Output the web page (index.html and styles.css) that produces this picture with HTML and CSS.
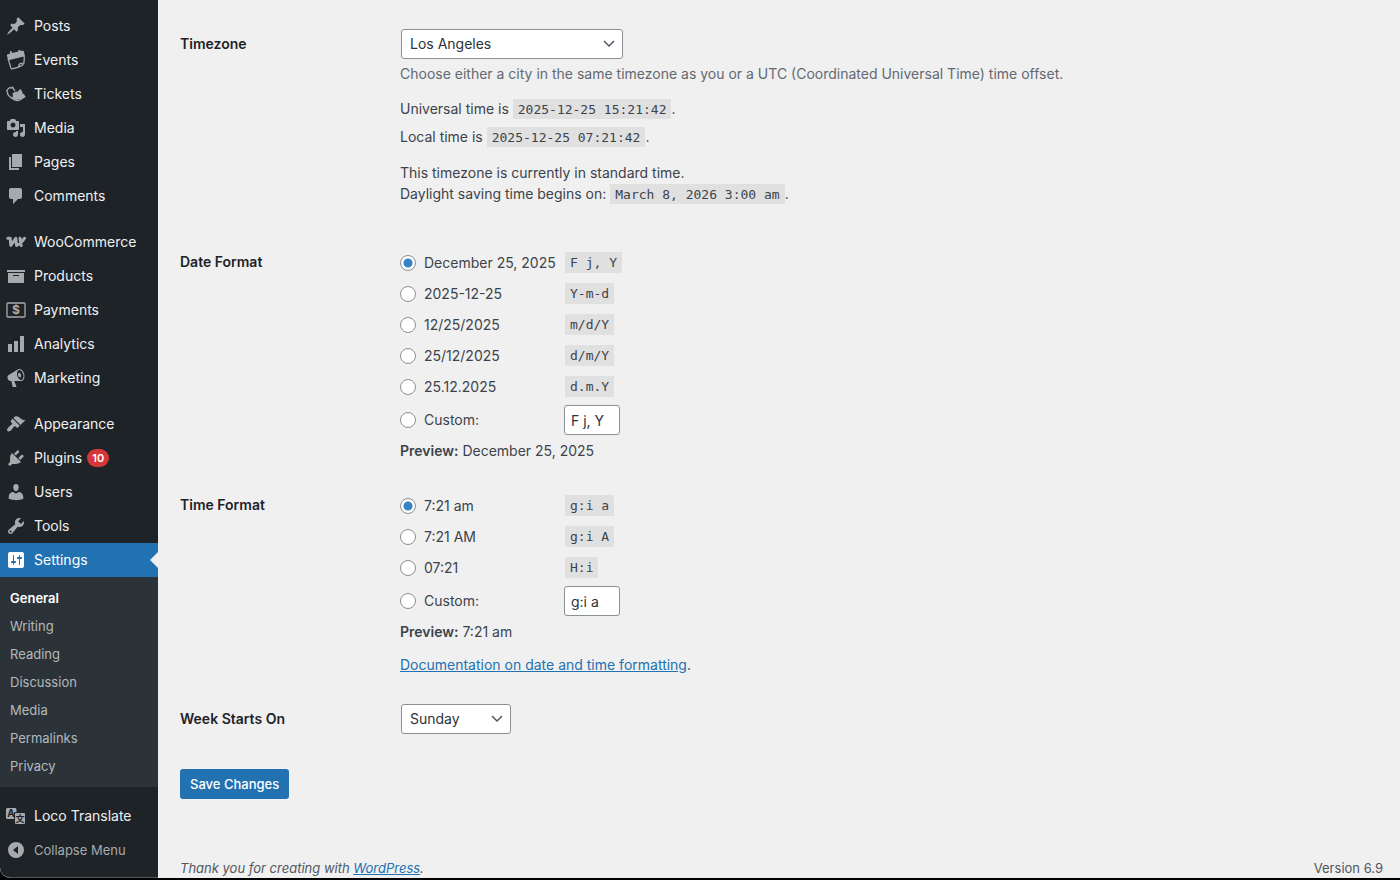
FILE: index.html
```html
<!DOCTYPE html>
<html lang="en-US">
<head>
    <meta charset="utf-8">
    <title>General Settings</title>
    <link rel="stylesheet" href="styles.css">
</head>

<body>
<div id="wpwrap">

    <nav id="adminmenu">
        <ul class="menu">
            <li><a href="#"><svg viewBox="0 0 20 20"><path d="M10.44 3.02l1.82-1.82 6.36 6.35-1.83 1.82c-1.05-.68-2.48-.57-3.41.36l-.75.75c-.92.93-1.04 2.35-.35 3.41l-1.83 1.82-2.41-2.41-2.8 2.79c-.42.42-3.38 2.71-3.8 2.29s1.86-3.39 2.28-3.81l2.79-2.79L4.1 9.36l1.83-1.82c1.05.69 2.48.57 3.4-.36l.75-.75c.93-.92 1.05-2.35.36-3.41z"/></svg>Posts</a></li>
            <li><a href="#"><svg viewBox="0 0 20 20"><path d="M1 4.500L4 3.700 3.700 1.500l1.800-.4.5 2 6.500-1.600-.4-1.500 1.900-.4.5 1.500 2-.3c.9 0 1.500.5 1.600 1.200l.6 4.200L2.600 10.200.9 6z"/><path class="line" d="M2 8.500l3 9.600c.2.600.600.800 1.200.700l6.300-1.600c.2-2.400.8-3.800 2.600-3.900l2.800-.2c.5-2.500.5-5 .2-8M12.500 17.200c2.300-.7 4.500-2.200 5.400-4.100"/></svg>Events</a></li>
            <li><a href="#"><svg viewBox="0 0 20 20"><path class="line" d="M9 7.200L6.600 3.300c-.8.900-1.700.9-2.500.2C2.300 4.300 1 5.700.8 7.500c.9.400 1.100 1.300.7 2.300 2.500 3.700 5.900 6.200 10 6.800 1.400-.1 2.600-.7 3.500-1.800"/><path d="M6.300 9.300l4-1.900c.8.800 1.900.4 2.100-.8l2.200-1.500 1.900 3.100c-.5 1 .3 2 1.400 1.700l1.800 3-4.900 3.100c-1.300-1.400-3.300-.5-3.700.3-2-.4-3.800-1.300-5.200-2.700 1.100-.8 1.700-2.300.4-4.300z"/></svg>Tickets</a></li>
            <li><a href="#"><svg viewBox="0 0 20 20"><path d="M13 11V4c0-.55-.45-1-1-1h-1.670L9 1H5L3.670 3H2c-.55 0-1 .45-1 1v7c0 .55.45 1 1 1h10c.55 0 1-.45 1-1zM7 4.500c1.380 0 2.500 1.120 2.500 2.500S8.380 9.500 7 9.500 4.500 8.380 4.500 7 5.620 4.500 7 4.500zM14 6h5v10.500c0 1.380-1.120 2.500-2.500 2.500S14 17.880 14 16.500s1.120-2.500 2.500-2.500c.17 0 .34.02.5.05V9h-3V6zm-4 8.050V13h2v3.500c0 1.380-1.120 2.500-2.500 2.500S7 17.880 7 16.500 8.120 14 9.500 14c.17 0 .34.02.5.05z"/></svg>Media</a></li>
            <li><a href="#"><svg viewBox="0 0 20 20"><path d="M6 15V2h10v13H6zm-1 1h8v2H3V5h2v11z"/></svg>Pages</a></li>
            <li><a href="#"><svg viewBox="0 0 20 20"><path d="M5 2h9c1.100 0 2 .9 2 2v7c0 1.100-.9 2-2 2h-2l-5 5v-5H5c-1.100 0-2-.9-2-2V4c0-1.100.9-2 2-2z"/></svg>Comments</a></li>
        </ul>

        <ul class="menu">
            <li><a href="#"><svg viewBox="0 0 20 20"><path class="woo" d="M1.800 6.300h2.400l.6 7.200 5-7.200.8 7.200c3.200-1.400 5.800-3.900 7.900-7.200M14 6.300l1.200 7.200"/></svg>WooCommerce</a></li>
            <li><a href="#"><svg viewBox="0 0 20 20"><path d="M19 4v2H1V4h18zM2 7h16v10H2V7zm11 3V9H7v1h6z"/></svg>Products</a></li>
            <li><a href="#"><svg viewBox="0 0 20 20"><rect class="card" x="1" y="3" width="18" height="14" rx="1"/><text x="10" y="14" font-size="12">$</text></svg>Payments</a></li>
            <li><a href="#"><svg viewBox="0 0 20 20"><path d="M18 18V2h-4v16h4zm-6 0V7H8v11h4zm-6 0v-8H2v8h4z"/></svg>Analytics</a></li>
            <li><a href="#"><svg viewBox="0 0 20 20"><path d="M18.150 5.940c.46 1.620.38 3.220-.02 4.480-.42 1.280-1.260 2.180-2.300 2.480-.16.06-.26.06-.4.060-.06.02-.12.02-.18.02-.06.02-.14.02-.22.02h-6.800l2.220 5.500c.02.14-.06.26-.14.34-.08.1-.24.16-.34.16H6.950c-.1 0-.26-.06-.34-.16-.08-.08-.16-.2-.14-.34l-1-5.500H4.250l-.02-.02c-.5.06-1.080-.18-1.540-.62s-.88-1.080-1.060-1.880c-.24-.8-.2-1.560-.02-2.200.18-.62.58-1.080 1.060-1.300l.02-.02 9-5.400c.1-.06.18-.1.24-.16.06-.04.14-.08.24-.12.16-.08.28-.12.5-.18 1.040-.3 2.240.1 3.220.98s1.840 2.240 2.260 3.860zm-2.580 5.980h-.02c.4-.1.74-.34 1.040-.7.58-.7.86-1.760.86-3.040 0-.64-.1-1.300-.28-1.980-.34-1.360-1.020-2.500-1.780-3.240s-1.680-1.100-2.460-.88c-.82.22-1.400.96-1.700 2-.32 1.040-.28 2.360.06 3.720.38 1.360 1 2.500 1.800 3.240.78.74 1.620 1.100 2.480.88zm-2.540-7.080c.22-.04.42-.02.62.04.38.16.76.48 1.020 1s.42 1.200.42 1.780c0 .3-.04.56-.12.8-.18.48-.44.84-.86.94-.34.1-.8-.06-1.140-.4s-.64-.86-.78-1.500c-.18-.62-.12-1.240.02-1.720s.48-.84.82-.94z"/></svg>Marketing</a></li>
        </ul>

        <ul class="menu">
            <li><a href="#"><svg viewBox="0 0 20 20"><path d="M14.480 11.060L7.410 3.990l1.500-1.500c.5-.56 2.300-.47 3.510.32 1.210.8 1.430 1.280 2.910 2.100 1.180.64 2.450 1.260 4.450.85zm-.71.71L6.700 4.700 4.930 6.470c-.39.39-.39 1.020 0 1.410l1.060 1.060c.39.39.39 1.030 0 1.420-.6.6-1.430 1.110-2.210 1.690-.35.26-.7.53-1.010.84C1.430 14.230.4 16.080 1.400 17.070c.99 1 2.840-.03 4.180-1.360.31-.31.58-.66.85-1.020.57-.78 1.080-1.610 1.690-2.210.39-.39 1.020-.39 1.410 0l1.060 1.060c.39.39 1.020.39 1.410 0z"/></svg>Appearance</a></li>
            <li><a href="#"><svg viewBox="0 0 20 20"><path d="M13.110 4.360L9.870 7.600 8 5.730l3.240-3.240c.35-.34 1.050-.2 1.560.32.52.51.66 1.210.31 1.550zm-8 1.770l.91-1.120 9.010 9.010-1.190.84c-.71.71-2.630 1.160-3.820 1.160H6.140L4.900 17.260c-.59.59-1.540.59-2.120 0-.59-.58-.59-1.530 0-2.120l1.240-1.240v-3.880c0-1.130.4-3.190 1.090-3.890zm7.260 3.970l3.240-3.240c.34-.35 1.040-.21 1.550.31.52.51.66 1.210.31 1.550l-3.240 3.250z"/></svg>Plugins <span class="update-count">10</span></a></li>
            <li><a href="#"><svg viewBox="0 0 20 20"><path d="M10 9.250c-2.270 0-2.730-3.440-2.730-3.440C7 4.020 7.820 2 9.970 2c2.160 0 2.980 2.020 2.710 3.810 0 0-.41 3.440-2.680 3.440zm0 2.570L12.720 10c2.390 0 4.520 2.330 4.520 4.530v2.490s-3.650 1.130-7.240 1.130c-3.650 0-7.240-1.130-7.240-1.130v-2.490c0-2.250 1.940-4.480 4.470-4.480z"/></svg>Users</a></li>
            <li><a href="#"><svg viewBox="0 0 20 20"><path d="M16.680 9.770c-1.340 1.340-3.300 1.670-4.950.99l-5.410 6.520c-.99.99-2.590.99-3.580 0s-.99-2.590 0-3.570l6.520-5.420c-.68-1.650-.35-3.610.99-4.950 1.280-1.280 3.120-1.620 4.720-1.060l-2.890 2.890 2.820 2.820 2.860-2.870c.53 1.580.18 3.390-1.080 4.650zM3.810 16.210c.4.39 1.040.39 1.430 0 .4-.4.4-1.040 0-1.430-.39-.4-1.030-.4-1.430 0-.39.39-.39 1.030 0 1.430z"/></svg>Tools</a></li>
            <li class="current"><a href="#"><svg viewBox="0 0 20 20"><path d="M18 16V4c0-1.100-.9-2-2-2H4c-1.100 0-2 .9-2 2v12c0 1.100.9 2 2 2h12c1.100 0 2-.9 2-2zM8 11h1c.55 0 1 .45 1 1s-.45 1-1 1H8v1.500c0 .28-.22.5-.5.5s-.5-.22-.5-.5V13H6c-.55 0-1-.45-1-1s.45-1 1-1h1V5.500c0-.28.22-.5.5-.5s.5.22.5.5V11zm5-2h-1c-.55 0-1-.45-1-1s.45-1 1-1h1V5.500c0-.28.22-.5.5-.5s.5.22.5.5V7h1c.55 0 1 .45 1 1s-.45 1-1 1h-1v5.500c0 .28-.22.5-.5.5s-.5-.22-.5-.5V9z"/></svg>Settings</a>
                <ul class="submenu">
                    <li><a href="#" class="on">General</a></li>
                    <li><a href="#">Writing</a></li>
                    <li><a href="#">Reading</a></li>
                    <li><a href="#">Discussion</a></li>
                    <li><a href="#">Media</a></li>
                    <li><a href="#">Permalinks</a></li>
                    <li><a href="#">Privacy</a></li>
                </ul>
            </li>
        </ul>

        <ul class="menu">
            <li><a href="#"><svg viewBox="0 0 20 20"><path d="M1.500 2H9c.8 0 1.500.7 1.500 1.500V6H9.500C8.600 6 8 6.600 8 7.500V13H1.500C.7 13 0 12.300 0 11.500v-8C0 2.700.7 2 1.500 2z"/><rect x="9" y="7" width="10" height="11" rx="1"/><text class="cut" x="5" y="11" font-size="10">A</text><text class="cut" x="14" y="16" font-size="9">文</text></svg>Loco Translate</a></li>
            <li><button type="button" class="collapse"><svg viewBox="0 0 20 20"><path fill-rule="evenodd" d="M10 2a8 8 0 1 0 0 16 8 8 0 0 0 0-16zM12 6v8l-5-4z"/></svg>Collapse Menu</button></li>
        </ul>
    </nav>

    <main id="content">
        <form id="settings" onsubmit="event.preventDefault();">
            <div class="row timezone">
                <label class="title" for="timezone">Timezone</label>
                <div class="field">
                    <div class="select">
                        <select id="timezone">
                            <option>Los Angeles</option>
                            <option>New York</option>
                            <option>UTC+0</option>
                        </select>
                        <svg viewBox="0 0 12 8"><path d="M1 1l5 5 5-5"/></svg>
                    </div>
                    <p class="description">Choose either a city in the same timezone as you or a UTC (Coordinated Universal Time) time offset.</p>
                    <p class="clock">Universal time is <code>2025-12-25 15:21:42</code>.</p>
                    <p>Local time is <code>2025-12-25 07:21:42</code>.</p>
                    <p class="dst">This timezone is currently in standard time.<br>Daylight saving time begins on: <code>March 8, 2026 3:00 am</code>.</p>
                </div>
            </div>

            <div class="row">
                <div class="title" id="date-title">Date Format</div>
                <div class="field" role="radiogroup" aria-labelledby="date-title">
                    <div class="choice"><label><input type="radio" name="date" checked>December 25, 2025</label><code>F j, Y</code></div>
                    <div class="choice"><label><input type="radio" name="date">2025-12-25</label><code>Y-m-d</code></div>
                    <div class="choice"><label><input type="radio" name="date">12/25/2025</label><code>m/d/Y</code></div>
                    <div class="choice"><label><input type="radio" name="date">25/12/2025</label><code>d/m/Y</code></div>
                    <div class="choice"><label><input type="radio" name="date">25.12.2025</label><code>d.m.Y</code></div>
                    <div class="choice custom"><label><input type="radio" name="date">Custom:</label><input type="text" value="F j, Y" aria-label="Custom date format"></div>
                    <p class="preview"><b>Preview:</b> December 25, 2025</p>
                </div>
            </div>

            <div class="row">
                <div class="title" id="time-title">Time Format</div>
                <div class="field" role="radiogroup" aria-labelledby="time-title">
                    <div class="choice"><label><input type="radio" name="time" checked>7:21 am</label><code>g:i a</code></div>
                    <div class="choice"><label><input type="radio" name="time">7:21 AM</label><code>g:i A</code></div>
                    <div class="choice"><label><input type="radio" name="time">07:21</label><code>H:i</code></div>
                    <div class="choice custom"><label><input type="radio" name="time">Custom:</label><input type="text" value="g:i a" aria-label="Custom time format"></div>
                    <p class="preview"><b>Preview:</b> 7:21 am</p>
                    <p class="docs"><a href="#">Documentation on date and time formatting</a>.</p>
                </div>
            </div>

            <div class="row">
                <label class="title" for="week">Week Starts On</label>
                <div class="field">
                    <div class="select short">
                        <select id="week">
                            <option>Sunday</option>
                            <option>Monday</option>
                            <option>Saturday</option>
                        </select>
                        <svg viewBox="0 0 12 8"><path d="M1 1l5 5 5-5"/></svg>
                    </div>
                </div>
            </div>

            <button type="submit" class="save">Save Changes</button>
        </form>

        <footer>
            <i>Thank you for creating with <a href="#">WordPress</a>.</i>
            <span>Version 6.9</span>
        </footer>
    </main>

</div>
</body>
</html>
```
FILE: styles.css
```css
* {
    box-sizing: border-box;
}

body {
    margin: 0;
    background: #000;
    color: #3c434a;
    font: 14px/20px Inter, "Liberation Sans", sans-serif;
}

ul, p {
    margin: 0;
    padding: 0;
    list-style: none;
}

a {
    color: #2271b1;
}

#wpwrap {
    display: flex;
    min-height: calc(100vh - 2px);
    background: #f0f0f1;
    border-bottom-left-radius: 10px;
    overflow: hidden;
}

/* side menu */
#adminmenu {
    width: 158px;
    flex-shrink: 0;
    padding-top: 9px;
    background: #1d2327;
    border-bottom: 1px solid #50575e;
    border-bottom-left-radius: 10px;
}

.menu {
    margin-bottom: 12px;
}

.menu:last-child {
    margin-bottom: 0;
}

.menu > li > a, .collapse {
    display: flex;
    align-items: center;
    position: relative;
    height: 34px;
    padding-left: 6px;
    color: #f0f0f1;
    text-decoration: none;
}

.menu svg {
    width: 20px;
    height: 20px;
    margin-right: 8px;
    fill: #a7aaad;
}

.menu svg .line, .menu svg .card, .menu svg .woo {
    fill: none;
    stroke: #a7aaad;
    stroke-width: 1.3;
}

.menu svg .woo {
    stroke-width: 3;
    stroke-linecap: round;
    stroke-linejoin: round;
}

.menu svg text {
    font-family: Inter, "Noto Sans CJK SC", sans-serif;
    font-weight: 700;
    text-anchor: middle;
}

.menu svg .cut {
    fill: #1d2327;
}

.update-count {
    min-width: 22px;
    height: 18px;
    margin-left: 5px;
    border-radius: 9px;
    background: #d63638;
    color: #fff;
    font-size: 11px;
    line-height: 18px;
    font-weight: 600;
    text-align: center;
}

.menu > .current > a {
    background: #2271b1;
    color: #fff;
}

.current > a svg {
    fill: #fff;
}

.current > a::after {
    content: "";
    position: absolute;
    right: 0;
    top: 9px;
    border: 8px solid transparent;
    border-left: 0;
    border-right-color: #f0f0f1;
}

.submenu {
    padding: 7px 0;
    background: #2c3338;
}

.submenu a {
    display: block;
    padding-left: 10px;
    color: #b4b9be;
    font-size: 13px;
    line-height: 28px;
    text-decoration: none;
}

.submenu .on {
    color: #fff;
    font-weight: 600;
}

.collapse {
    width: 100%;
    border: 0;
    background: none;
    color: #a7aaad;
    font: 13px/20px Inter, "Liberation Sans", sans-serif;
}

/* settings form */
#content {
    display: flex;
    flex-direction: column;
    flex: 1;
    padding: 29px 17px 0 22px;
}

.row {
    display: flex;
    margin-bottom: 29px;
}

.timezone {
    margin-bottom: 43px;
}

.title {
    width: 220px;
    flex-shrink: 0;
    padding-top: 5px;
    color: #1d2327;
    font-weight: 600;
}

.field {
    flex: 1;
}

.select {
    position: relative;
    width: 222px;
    margin-left: 1px;
}

.short {
    width: 110px;
}

select, input[type=text] {
    display: block;
    width: 100%;
    height: 30px;
    padding: 0 8px 1px;
    border: 1px solid #8c8f94;
    border-radius: 3px;
    background: #fff;
    color: #2c3338;
    font: 14px Inter, "Liberation Sans", sans-serif;
    appearance: none;
}

.select svg {
    position: absolute;
    right: 8px;
    top: 11px;
    width: 12px;
    height: 8px;
    fill: none;
    stroke: #50575e;
    stroke-width: 1.5;
    pointer-events: none;
}

code {
    padding: 3px 5px 2px;
    background: #e0e0e1;
    font: 13px/16px "DejaVu Sans Mono", monospace;
}

.description {
    margin-top: 5px;
    color: #646970;
}

.clock {
    margin: 15px 0 8px;
}

.dst {
    margin-top: 15px;
    line-height: 21px;
}

.choice {
    display: flex;
    align-items: center;
    height: 31px;
}

.choice label {
    display: flex;
    align-items: center;
    width: 165px;
}

.custom {
    height: 36px;
}

.custom label {
    width: 164px;
}

input[type=radio] {
    width: 16px;
    height: 16px;
    margin: 0 8px 0 0;
    border: 1px solid #8c8f94;
    border-radius: 50%;
    background: #fff;
    appearance: none;
}

input[type=radio]:checked {
    background: radial-gradient(circle, #3582c4 4px, #fff 5px);
}

.custom input[type=text] {
    width: 56px;
    padding: 0 6px;
}

.preview {
    margin-top: 3px;
}

.preview b {
    font-weight: 600;
}

.docs {
    margin-top: 13px;
}

.save {
    display: block;
    height: 30px;
    margin-top: 35px;
    padding: 0 10px;
    border: 0;
    border-radius: 3px;
    background: #2271b1;
    color: #fff;
    font: 500 13px Inter, "Liberation Sans", sans-serif;
}

footer {
    display: flex;
    justify-content: space-between;
    margin-top: auto;
    color: #50575e;
    font-size: 13px;
}
```
